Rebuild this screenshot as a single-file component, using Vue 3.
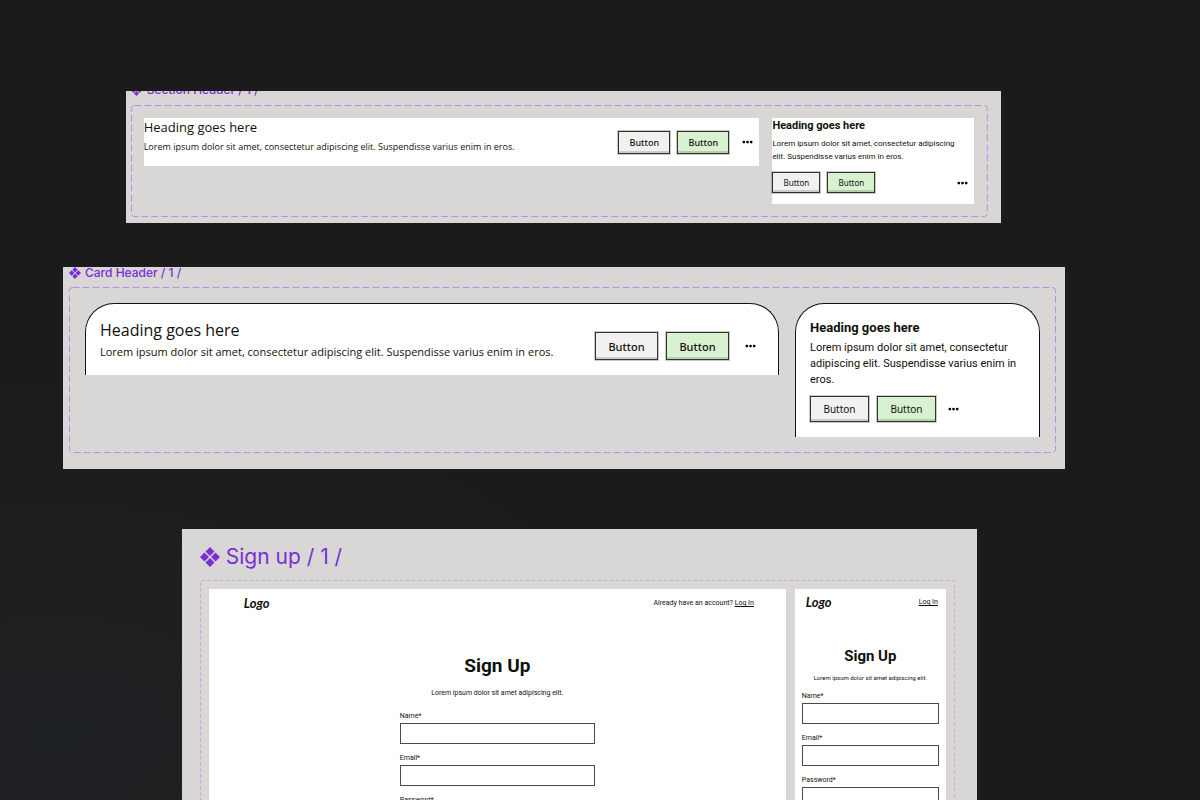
<script setup>
const fields = ['Name*', 'Email*', 'Password*']
const actions = [
  { label: 'Button', kind: 'plain' },
  { label: 'Button', kind: 'green' },
]
const headers = [
  { name: 'section-board', title: 'Section Header / 1 /' },
  { name: 'card-board', title: 'Card Header / 1 /' },
]
const versions = [
  { name: 'desktop', prompt: 'Already have an account?' },
  { name: 'mobile', prompt: '' },
]
const mark = 'M10 0l4.5 4.5L10 9 5.5 4.5zM10 11l4.5 4.5L10 20l-4.5-4.5zM4.5 5.5L9 10l-4.5 4.5L0 10zM15.5 5.5L20 10l-4.5 4.5L11 10z'
const lorem = 'Lorem ipsum dolor sit amet, consectetur adipiscing elit. Suspendisse varius enim in eros.'
const signupText = 'Lorem ipsum dolor sit amet adipiscing elit.'
</script>

<template>
  <main class="canvas">
    <section v-for="h in headers" :key="h.name" class="board" :class="h.name">
      <h2 class="title">
        <svg class="mark" viewBox="0 0 20 20"><path :d="mark" /></svg>
        <span>{{ h.title }}</span>
      </h2>
      <div class="frame">
        <svg class="dashes"><rect transform="translate(0.5 0.5)" width="100%" height="100%" rx="3" /></svg>
        <article v-for="size in ['wide', 'narrow']" :key="size" :class="size">
          <div class="copy">
            <h3>Heading goes here</h3>
            <p>{{ lorem }}</p>
          </div>
          <div class="actions">
            <button v-for="a in actions" :key="a.kind" type="button" class="btn" :class="a.kind">{{ a.label }}</button>
            <button type="button" class="more" aria-label="More">
              <svg viewBox="0 0 12 4"><circle cx="2" cy="2" r="1.5" /><circle cx="6" cy="2" r="1.5" /><circle cx="10" cy="2" r="1.5" /></svg>
            </button>
          </div>
        </article>
      </div>
    </section>

    <section class="board signup-board">
      <h2 class="title">
        <svg class="mark" viewBox="0 0 20 20"><path :d="mark" /></svg>
        <span>Sign up / 1 /</span>
      </h2>
      <div class="frame">
        <svg class="dashes"><rect transform="translate(0.5 0.5)" width="100%" height="100%" rx="1" /></svg>
        <article v-for="v in versions" :key="v.name" :class="v.name">
          <header>
            <span class="logo">Logo</span>
            <span class="login">{{ v.prompt }} <a href="#login">Log In</a></span>
          </header>
          <form>
            <h3>Sign Up</h3>
            <p>{{ signupText }}</p>
            <template v-for="f in fields" :key="f">
              <label :for="v.name + '-' + f">{{ f }}</label>
              <input :id="v.name + '-' + f" :type="f === 'Password*' ? 'password' : 'text'" />
            </template>
          </form>
        </article>
      </div>
    </section>
  </main>
</template>

<style>
html { background: #1b1b1b; }
body { margin: 0; height: 100vh; overflow: hidden; }
</style>

<style scoped>
.canvas {
  box-sizing: border-box;
  height: 100vh;
  overflow: hidden;
  padding: 91px 11.25% 0 5.25%;
  background: radial-gradient(ellipse 50% 45% at 5% 92%, #1f2224, #1b1b1b);
  color: #11110c;
  font-family: Roboto, sans-serif;
}
h2, h3, p { margin: 0; font-weight: 400; }
.board { box-sizing: border-box; overflow: hidden; background: #d8d7d5; }
.title {
  display: flex;
  align-items: center;
  color: #792ed8;
  font-family: Inter, sans-serif;
  white-space: nowrap;
}
.mark { flex: none; fill: #792ed8; }
.frame { position: relative; display: flex; align-items: flex-start; box-sizing: border-box; }
.dashes { position: absolute; top: 0; left: 0; width: calc(100% - 1px); height: calc(100% - 1px); overflow: visible; pointer-events: none; }
.dashes rect { fill: none; stroke: #b88df0; stroke-width: 1; stroke-dasharray: 7 3; }
article { box-sizing: border-box; background: #fff; }
.wide { display: flex; justify-content: space-between; flex: 1; font-family: "Open Sans", sans-serif; }
.wide p, .wide h3 { white-space: nowrap; }
.narrow { flex: none; }
.narrow h3 { font-weight: 700; }
.actions { display: flex; align-items: center; }
.btn {
  box-sizing: border-box;
  padding: 0;
  color: #11110c;
  font-family: "Noto Sans", sans-serif;
  font-weight: 500;
  border: 1px solid #33332e;
  box-shadow: inset 0 -2px 0 rgba(0, 0, 0, 0.15), 0 0 0 1px rgba(40, 40, 35, 0.25);
}
.plain { background: #f1f1f1; }
.green { background: #d8f2d1; }
.more { display: flex; padding: 0; border: 0; background: none; }
.more svg { width: 11px; height: 4px; }

.section-board { margin: 0 6.35% 0 6.25%; height: 132px; padding: 0 14px 0 5px; }
.section-board .title { height: 14px; gap: 5px; font-size: 12px; font-weight: 500; line-height: 15px; align-items: flex-end; }
.section-board .title span { position: relative; bottom: 8px; }
.section-board .title .mark { position: relative; bottom: 9px; width: 11px; height: 11px; }
.section-board .frame { height: 112px; padding: 13px; gap: 13px; }
.section-board .wide { height: 48px; padding-right: 6px; }
.section-board .wide h3 { font-size: 13px; line-height: 18px; }
.section-board .wide p { font-size: 9px; line-height: 22px; }
.section-board .wide .actions { gap: 7px; }
.section-board .wide .btn { width: 52px; height: 23px; font-size: 9px; }
.section-board .wide .more { margin-left: 6px; }
.section-board .narrow { width: 202px; height: 86px; }
.section-board .narrow h3 { font-size: 11px; line-height: 16px; }
.section-board .narrow p { padding: 3px 6px 0 0; font-size: 8px; line-height: 13px; }
.section-board .narrow .actions { gap: 7px; margin-top: 9px; padding-right: 6px; }
.section-board .narrow .btn { width: 48px; height: 21px; font-size: 8px; font-weight: 400; }
.section-board .narrow .more { margin-left: auto; }

.card-board { margin-top: 44px; height: 202px; padding: 0 9px 0 6px; }
.card-board .title { height: 20px; gap: 4px; font-size: 12px; font-weight: 500; line-height: 11px; align-items: flex-start; }
.card-board .title .mark { width: 12px; height: 12px; }
.card-board .frame { height: 166px; padding: 16px; gap: 16px; }
.card-board article { border: 1px solid #11110c; border-bottom: 0; border-radius: 29px 29px 0 0; }
.card-board .wide { height: 72px; padding: 15px 22px 0 14px; }
.card-board .wide h3 { font-size: 16px; line-height: 22px; }
.card-board .wide p { font-size: 11px; line-height: 22px; }
.card-board .wide .actions { align-self: flex-start; gap: 8px; padding-top: 13px; }
.card-board .wide .btn { width: 63px; height: 28px; font-size: 11px; }
.card-board .wide .more { margin-left: 8px; }
.card-board .narrow { width: 245px; height: 134px; padding: 15px 15px 0 14px; }
.card-board .narrow h3 { font-size: 13px; line-height: 18px; }
.card-board .narrow p { padding-top: 3px; font-size: 11px; line-height: 16px; }
.card-board .narrow .actions { gap: 8px; margin-top: 8px; }
.card-board .narrow .btn { width: 59px; height: 26px; font-size: 10px; font-weight: 400; }
.card-board .narrow .more { margin-left: 4px; }

.signup-board { margin: 60px 8.8% 0 11.85%; height: 330px; padding: 14px 22px 0 18px; }
.signup-board .title { height: 28px; margin-bottom: 9px; gap: 6px; font-size: 21px; line-height: 28px; }
.signup-board .title .mark { width: 20px; height: 20px; }
.signup-board .frame { height: 340px; padding: 9px; gap: 9px; }
.signup-board .dashes rect { stroke: #c7a9ea; stroke-dasharray: 4 2; }
.signup-board article { height: 340px; }
.desktop { flex: 1; }
.mobile { flex: none; width: 151px; }
.signup-board header { display: flex; justify-content: space-between; align-items: center; box-sizing: border-box; height: 28px; }
.desktop header { padding: 0 32px 0 35px; }
.mobile header { padding: 0 8px 2px 11px; }
.logo { font-family: Lato, sans-serif; font-size: 13px; font-weight: 700; font-style: italic; }
.login { font-size: 7px; line-height: 10px; }
.login a { color: inherit; text-decoration: underline; }
.signup-board form { display: flex; flex-direction: column; }
.desktop form { width: 195px; margin: 37px auto 0; }
.mobile form { margin: 29px 7px 0; }
.signup-board h3 { font-weight: 700; text-align: center; }
.desktop h3 { font-size: 19px; line-height: 24px; }
.mobile h3 { font-size: 15px; line-height: 20px; }
.signup-board p { margin: 8px 0 10px; font-size: 7px; line-height: 14px; text-align: center; white-space: nowrap; }
.signup-board .mobile p { margin: 5px 0; font-size: 6px; }
.signup-board label { font-size: 7px; line-height: 13px; }
.signup-board input { box-sizing: border-box; width: 100%; height: 21px; margin: 0 0 8px; padding: 0 4px; border: 1px solid #4a4a46; border-radius: 0; background: #fff; font: 7px Roboto, sans-serif; }
</style>
